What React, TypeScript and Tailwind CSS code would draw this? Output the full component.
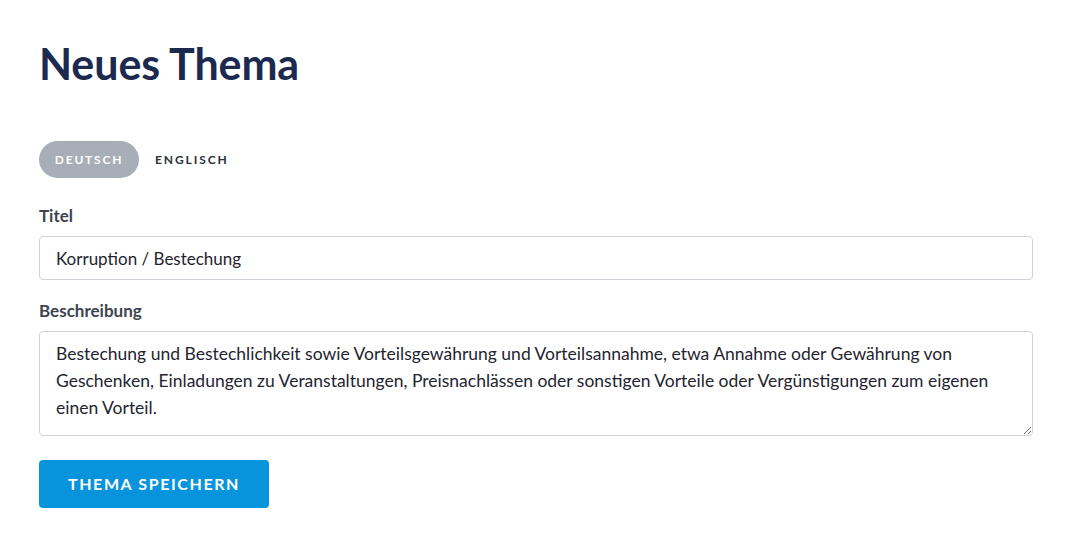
import React from 'react';

const font = { fontFamily: 'Lato, "Noto Sans", sans-serif' };

const App: React.FC = () => {
   return (
      <div className="min-h-screen bg-white px-[39px] pt-[36px]" style={font}>
         <h1 className="text-[43px] font-bold leading-[56px] text-[#1c2a4f] tracking-[-0.1px]">Neues Thema</h1>

         <div className="mt-[49px] flex items-center gap-4">
            <button className="h-[37px] w-[100px] rounded-full bg-[#a7aeb8] text-[12px] font-bold tracking-[0.15em] text-white">
               DEUTSCH
            </button>
            <button className="text-[12px] font-bold tracking-[0.16em] text-[#2a2f3a]">ENGLISCH</button>
         </div>

         <label className="mt-[26px] block text-[17px] font-bold leading-[24px] text-[#3d4450]">Titel</label>
         <input
            className="mt-[8px] block h-[44px] w-[994px] rounded-[4px] border border-[#cfd3d9] px-4 text-[17px] text-[#1f2430] outline-none"
            defaultValue="Korruption / Bestechung"
         />

         <label className="mt-[19px] block text-[17px] font-bold leading-[24px] text-[#3d4450]">Beschreibung</label>
         <textarea
            className="mt-[8px] block h-[105px] w-[994px] rounded-[4px] border border-[#cfd3d9] px-4 py-[8px] text-[17.5px] leading-[27px] text-[#1f2430] outline-none"
            defaultValue="Bestechung und Bestechlichkeit sowie Vorteilsgewährung und Vorteilsannahme, etwa Annahme oder Gewährung von Geschenken, Einladungen zu Veranstaltungen, Preisnachlässen oder sonstigen Vorteile oder Vergünstigungen zum eigenen einen Vorteil."
         />

         <button className="mt-[24px] h-[48px] w-[230px] rounded-[4px] bg-[#0894dc] text-[16px] font-bold tracking-[0.1em] text-white">
            THEMA SPEICHERN
         </button>
      </div>
   );
};

export default App;
